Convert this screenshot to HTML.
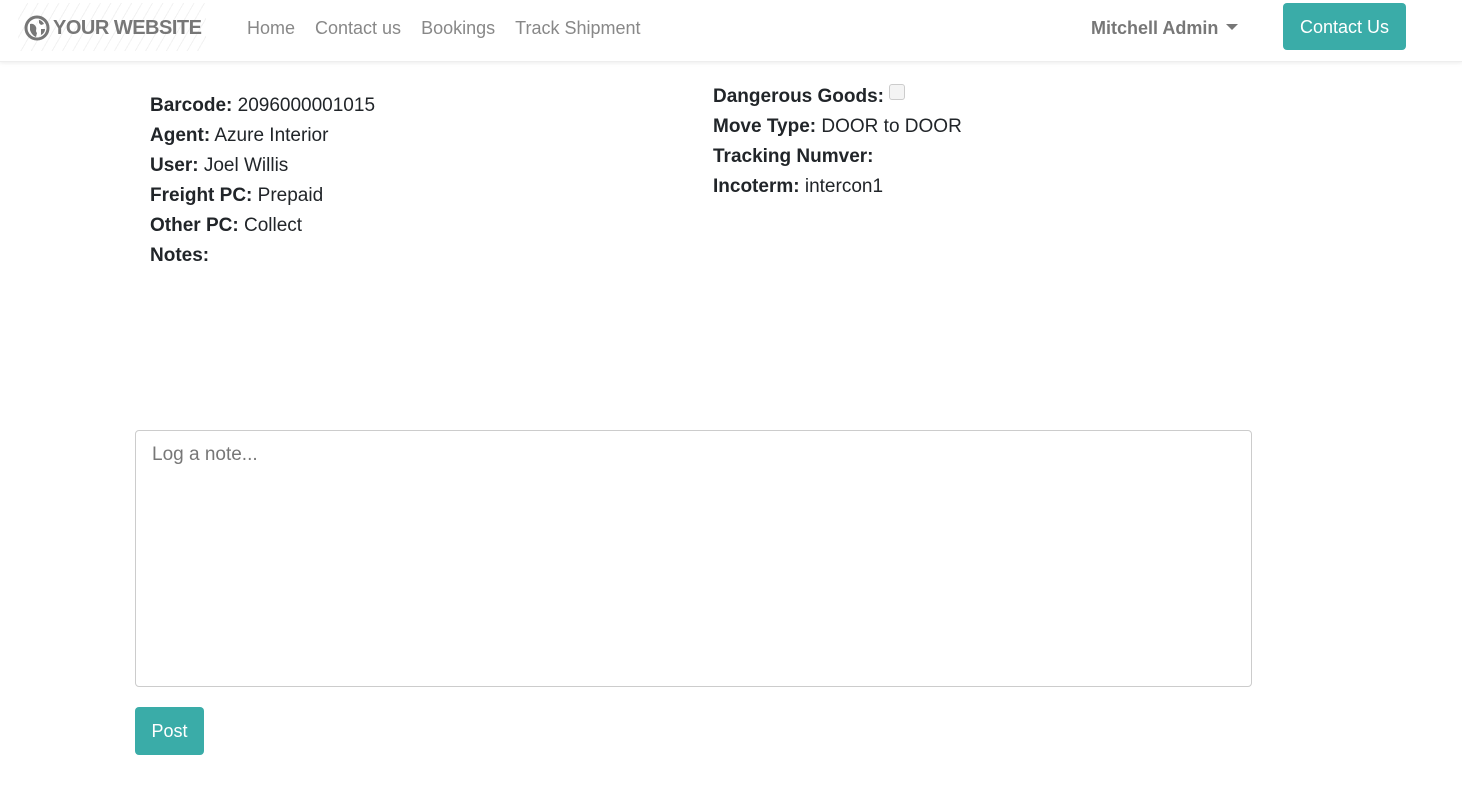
<!DOCTYPE html>
<html><head><meta charset="utf-8"><style>
*{box-sizing:border-box}
body{margin:0;width:1462px;height:798px;background:#fff;font-family:"Liberation Sans",sans-serif;color:#212529;overflow:hidden}
.nav{position:absolute;left:0;top:0;width:1462px;height:62px;box-shadow:0 1px 4px rgba(0,0,0,.08);border-bottom:1px solid #eee}
.logo{position:absolute;left:18px;top:3px;width:188px;height:48px;background:repeating-linear-gradient(120deg,#fff 0 8px,#f2f2f2 8px 9px);display:flex;align-items:center;color:#777;font-weight:bold;font-size:20px;letter-spacing:-0.5px;padding-top:2px}
.links{position:absolute;left:247px;top:18px;font-size:18px;color:#888}
.links span{margin-right:20px}
.user{position:absolute;left:1091px;top:18px;font-size:18px;font-weight:bold;color:#777}
.caret{display:inline-block;border-left:6px solid transparent;border-right:6px solid transparent;border-top:6px solid #777;margin-left:8px;vertical-align:4px}
.btn{position:absolute;background:#3aaca8;color:#fff;border-radius:4px;font-size:18px;display:flex;align-items:center;justify-content:center}
.f{position:absolute;font-size:19px;line-height:30px}
.f b{font-weight:bold}
.ta{position:absolute;left:135px;top:430px;width:1117px;height:257px;border:1px solid #ccc;border-radius:4px;padding:13px 16px;font-size:19px;color:#777}
</style></head><body>
<div class="nav">
 <div class="logo"><svg width="26" height="26" viewBox="0 0 26 26" style="margin:0 3px 0 6px"><circle cx="13" cy="13" r="11" fill="none" stroke="#777" stroke-width="3"/><path d="M6 9c3-1 5 1 6 3s-1 4 1 6l-1 4c-3-1-5-4-6-7z M15 5c2 0 4 2 5 4l-3 1-2-2z M17 14l4 0c0 3-2 5-4 6z" fill="#777"/></svg>YOUR WEBSITE</div>
 <div class="links"><span>Home</span><span>Contact us</span><span>Bookings</span><span>Track Shipment</span></div>
 <div class="user">Mitchell Admin<span class="caret"></span></div>
 <div class="btn" style="left:1283px;top:3px;width:123px;height:47px;padding-top:2px">Contact Us</div>
</div>
<div class="f" style="left:150px;top:91px">
<div><b>Barcode:</b> 2096000001015</div>
<div><b>Agent:</b> Azure Interior</div>
<div><b>User:</b> Joel Willis</div>
<div><b>Freight PC:</b> Prepaid</div>
<div><b>Other PC:</b> Collect</div>
<div><b>Notes:</b></div>
</div>
<div class="f" style="left:713px;top:82px">
<div><b>Dangerous Goods:</b> <span style="display:inline-block;width:16px;height:16px;border:1px solid #ccc;border-radius:3px;background:#f4f4f4;vertical-align:2px"></span></div>
<div><b>Move Type:</b> DOOR to DOOR</div>
<div><b>Tracking Numver:</b></div>
<div><b>Incoterm:</b> intercon1</div>
</div>
<div class="ta">Log a note...</div>
<div class="btn" style="left:135px;top:707px;width:69px;height:48px">Post</div>
</body></html>
